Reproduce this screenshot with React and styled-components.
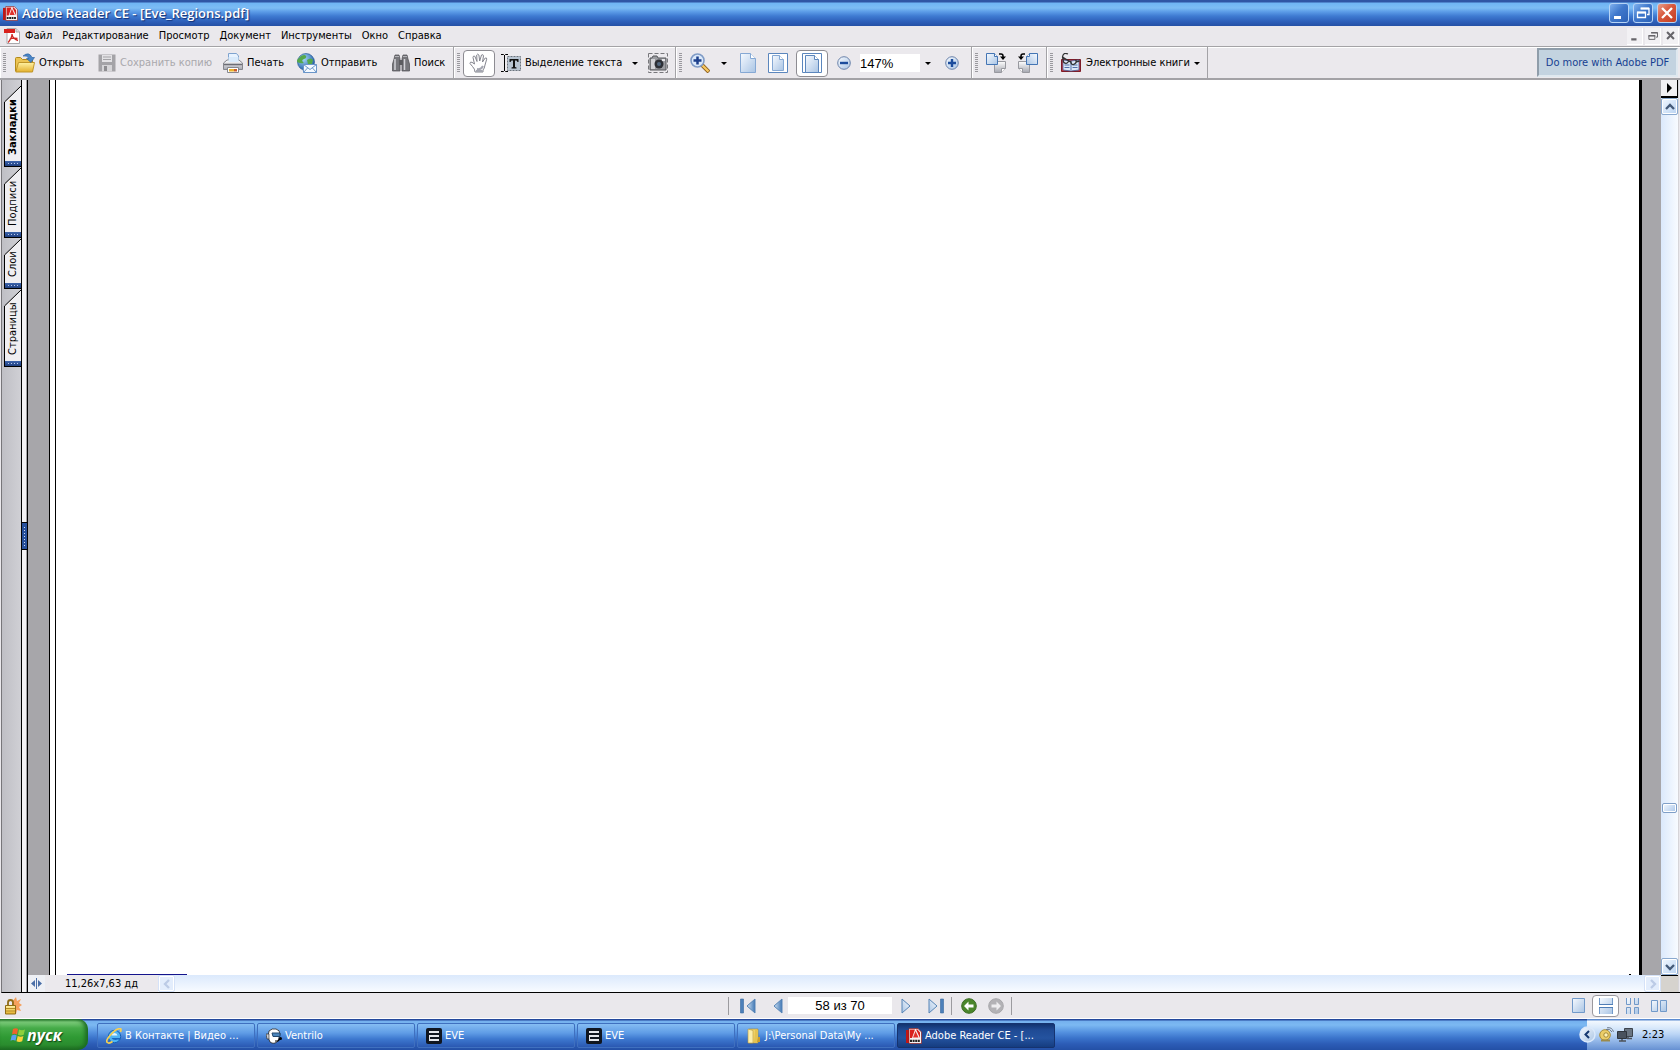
import React, { useState } from "react";
import styled, { createGlobalStyle, css } from "styled-components";

const UI_FONT = '"DejaVu Sans Condensed", "Noto Sans", sans-serif';

const GlobalStyle = createGlobalStyle`
  * {
    box-sizing: border-box;
  }
  body {
    margin: 0;
    overflow: hidden;
  }
  button, input {
    font: inherit;
    color: inherit;
    margin: 0;
    padding: 0;
    border: 0;
    background: none;
  }
`;

const Screen = styled.div`
  display: flex;
  flex-direction: column;
  height: 100vh;
  background: #eae8ec;
  color: #000;
  font-family: ${UI_FONT};
  font-size: 11px;
  line-height: 14px;
`;

const Icon = styled.svg`
  display: block;
  flex: none;
  width: ${(p) => p.$w || 16}px;
  height: ${(p) => p.$h || p.$w || 16}px;
`;

/* ---- title bar ---- */

const TitleBar = styled.header`
  display: flex;
  align-items: center;
  flex: none;
  height: 26px;
  padding: 0 3px;
  gap: 4px;
  background: linear-gradient(#2f55a5 0 2px, #6fb4f4 3px, #7cbcf4 8px, #5a9ae6 12px, #3f7bd2 16px, #2f62bc 21px, #2550a6 26px);
`;

const Title = styled.h1`
  flex: 1;
  margin: 0;
  color: #fff;
  font-family: "Open Sans", "Noto Sans", sans-serif;
  font-size: 13px;
  font-weight: 600;
  line-height: 18px;
  text-shadow: 1px 1px 1px #122e72;
`;

const WindowButton = styled.button`
  display: grid;
  place-items: center;
  width: 20px;
  height: 20px;
  border: 1px solid #b6d4f6;
  border-radius: 3px;
  background: ${(p) =>
    p.$danger
      ? "linear-gradient(135deg, #e8a08c, #d8583c 45%, #c23e22)"
      : "linear-gradient(135deg, #7fb0ee, #3f78cc 45%, #2c62b8)"};
`;

/* ---- menu ---- */

const MenuBar = styled.nav`
  display: flex;
  align-items: center;
  flex: none;
  height: 20px;
  padding: 0 1px 0 4px;
  gap: 2px;
`;

const MenuItems = styled.div`
  display: flex;
  flex: 1;
  gap: 10px;
  padding-left: 3px;
`;

const MenuItem = styled.button`
  white-space: nowrap;
`;

const DocButton = styled.button`
  display: grid;
  place-items: center;
  width: 16px;
  height: 17px;
  background: #f2f1f4;
  border-right: 1px solid #fff;
  border-bottom: 1px solid #fff;
`;

/* ---- toolbar ---- */

const ToolBar = styled.div`
  display: flex;
  flex: none;
  height: 34px;
  padding-right: 2px;
  border-top: 1px solid #a4a3a6;
  border-bottom: 2px solid #a3a2a6;
  background: #ebe9ed;
  box-shadow: inset 0 1px #fff;
`;

const ToolGroup = styled.div`
  display: flex;
  align-items: center;
  flex: none;
  width: ${(p) => p.$w}px;
  padding: 1px 0 0 3px;
  border-right: 1px solid #a3a2a6;
  box-shadow: inset 1px 0 #fff;
`;

const Grip = styled.span`
  width: 3px;
  height: 20px;
  margin-right: ${(p) => p.$gap || 8}px;
  background: repeating-linear-gradient(#9a999e 0 1px, transparent 1px 2px);
`;

const ToolButton = styled.button`
  display: flex;
  align-items: center;
  flex: none;
  gap: ${(p) => p.$gap || 4}px;
  height: 27px;
  width: ${(p) => p.$w}px;
  white-space: nowrap;
  ${(p) =>
    p.$center &&
    css`
      justify-content: center;
    `}
  ${(p) =>
    p.$active &&
    css`
      justify-content: center;
      background: #fff;
      border: 1px solid #8d8c92;
      border-radius: 4px;
    `}
  ${(p) =>
    p.$apart &&
    css`
      margin-right: 6px;
    `}
  &:disabled {
    color: #a9a8ac;
  }
`;

const Caret = styled.span`
  border: 3px solid transparent;
  border-top-color: #000;
  border-bottom: 0;
`;

const ZoomInput = styled.input`
  flex: none;
  width: 60px;
  height: 18px;
  background: #fff;
  font-family: "Liberation Sans", Arial, sans-serif;
  font-size: 13px;
`;

const PromoLink = styled.a`
  display: grid;
  place-items: center;
  width: 141px;
  margin: 1px 0 1px auto;
  border: 2px solid;
  border-color: #8f9daa #dfe8ef #dfe8ef #8f9daa;
  background: #c3d3e0;
  color: #173f91;
  font-family: "DejaVu Sans Condensed", sans-serif;
  font-size: 11px;
  text-decoration: none;
  white-space: nowrap;
`;

/* ---- workspace ---- */

const Workspace = styled.main`
  display: flex;
  flex: 1;
  min-height: 0;
  border-left: 1px solid #77767a;
  margin-left: 1px;
  padding-right: 1px;
  border-bottom: 1px solid #000;
`;

const NavPane = styled.div`
  display: flex;
  flex-direction: column;
  flex: none;
  width: 20px;
  padding: 6px 0 0 2px;
  gap: 1px;
  background: linear-gradient(90deg, #bfbfc5, #d0d0d5);
  border-right: 1px solid #000;
`;

const SideTab = styled.button`
  position: relative;
  display: flex;
  flex-direction: column;
  flex: none;
  width: 17px;
  height: ${(p) => p.$h}px;
`;

const TabShape = styled.svg`
  position: absolute;
  inset: 0;
  width: 100%;
  height: 100%;
`;

const TabText = styled.span`
  position: relative;
  flex: 1;
  writing-mode: vertical-rl;
  transform: rotate(180deg);
  width: 17px;
  line-height: 17px;
  text-align: left;
  padding-top: 6px;
  font-weight: ${(p) => (p.$bold ? 700 : 400)};
`;

const TabFoot = styled.span`
  position: relative;
  height: 6px;
  margin-left: 1px;
  border-bottom: 1px solid #000;
  background: repeating-linear-gradient(90deg, transparent 0 2px, #b8c8ec 2px 3px) 1px 2px / 13px 1px no-repeat, linear-gradient(#3c64ac, #1f3f80);
`;

const Splitter = styled.div`
  display: grid;
  align-items: center;
  flex: none;
  width: 6px;
  background: #f4f3f5;
  border-right: 1px solid #000;
  box-shadow: inset -1px 0 #a5a4a8;
`;

const SplitHandle = styled.button`
  width: 6px;
  height: 28px;
  border: solid #000;
  border-width: 1px 1px 1px 0;
  background: repeating-linear-gradient(transparent 0 2px, #cfdcf5 2px 3px) 2px 2px / 1px 22px no-repeat, #27509b;
`;

const DocPane = styled.section`
  display: flex;
  flex-direction: column;
  flex: 1;
  min-width: 0;
`;

const Canvas = styled.div`
  display: flex;
  flex: 1;
  padding: 0 19px 0 21px;
  min-height: 0;
  background: #a7a6aa;
`;

const PageMargin = styled.div`
  flex: none;
  width: 7px;
  border: solid #000;
  border-width: 0 1px;
  background: #fff;
`;

const Page = styled.article`
  display: flex;
  align-items: flex-end;
  justify-content: space-between;
  flex: 1;
  padding: 0 8px 0 11px;
  background: #fff;
  border-right: 3px solid #000;
`;

const PageRule = styled.span`
  width: ${(p) => p.$w}px;
  height: 1px;
  background: ${(p) => p.$color};
`;

const BottomScroll = styled.div`
  display: flex;
  flex: none;
  height: 17px;
  background: linear-gradient(#dbe9fc, #f8fbff);
`;

const PaneToggle = styled.button`
  display: grid;
  place-items: center;
  width: 17px;
  background: #eef0f5;
`;

const PageSize = styled.span`
  width: 113px;
  padding-left: 20px;
  line-height: 18px;
  background: #ebe9ed;
  white-space: nowrap;
`;

const ScrollButton = styled.button`
  display: grid;
  place-items: center;
  flex: none;
  width: 17px;
  height: 17px;
  border: 1px solid ${(p) => (p.$faint ? "#d5e2f8" : "#8aa9cf")};
  border-radius: 2px;
  background: ${(p) =>
    p.$faint ? "#e3edfc" : "linear-gradient(135deg, #f2f8ff, #b9d3f2)"};
  box-shadow: inset 0 0 0 1px #fff;
  color: ${(p) => (p.$faint ? "#bccbe6" : "#445a78")};
`;

const SideScroll = styled.div`
  display: flex;
  flex-direction: column;
  flex: none;
  width: 18px;
  background: linear-gradient(90deg, #dbe9fc, #f8fbff);
  border-right: 1px solid #d6d5d9;
`;

const Flyout = styled.button`
  display: grid;
  place-items: center;
  height: 18px;
  background: #f1f0f3;
  border: solid #000;
  border-width: 0 1px 2px 0;
`;

const Track = styled.div`
  flex: ${(p) => p.$grow};
`;

const Thumb = styled.div`
  height: 10px;
  margin: 0 1px;
  border: 1px solid #7f9fc8;
  border-radius: 2px;
  background: linear-gradient(135deg, #f4f9ff, #a9c6ea);
  box-shadow: inset 0 0 0 1px #fff;
`;

const Corner = styled.div`
  height: 17px;
  background: #d6d3ce;
  border-top: 1px solid #000;
`;

/* ---- status bar ---- */

const StatusBar = styled.footer`
  display: flex;
  align-items: center;
  flex: none;
  height: 26px;
  padding: 0 7px 0 4px;
  border-bottom: 1px solid #fff;
`;

const StatusLeft = styled.div`
  width: 171px;
`;

const Pager = styled.div`
  display: flex;
  align-items: center;
  margin: 0 auto;
  height: 18px;
  width: 284px;
  border: solid #9c9b9f;
  border-width: 0 1px;
`;

const PagerButton = styled.button`
  display: grid;
  place-items: center;
  flex: none;
  width: ${(p) => p.$w}px;
  height: 18px;
`;

const PageInput = styled.input`
  flex: none;
  width: 104px;
  height: 17px;
  background: #fff;
  text-align: center;
  font-family: "Liberation Sans", Arial, sans-serif;
  font-size: 13px;
`;

const PagerLine = styled.span`
  flex: none;
  width: 1px;
  height: 18px;
  background: #9c9b9f;
`;

const ViewModes = styled.div`
  display: flex;
  align-items: center;
`;

const ViewButton = styled.button`
  display: grid;
  place-items: center;
  width: 27px;
  height: 22px;
  border: 1px solid ${(p) => (p.$active ? "#9a989e" : "transparent")};
  border-radius: 4px;
  background: ${(p) => (p.$active ? "#fff" : "none")};
`;

/* ---- task bar ---- */

const TaskBar = styled.div`
  display: flex;
  flex: none;
  height: 31px;
  background: linear-gradient(#24489c 0 1px, #74b0ee 2px, #7cb9f2 6px, #5592e0 13px, #3b74cb 19px, #2c5cb6 25px, #2350a6 31px);
  color: #fff;
`;

const StartButton = styled.button`
  display: flex;
  align-items: center;
  gap: 1px;
  flex: none;
  width: 88px;
  margin-right: 9px;
  padding-left: 10px;
  border-radius: 0 10px 10px 0;
  background: linear-gradient(#2c7f31 0, #7dcc7b 3px, #46ab49 9px, #2f9a34 18px, #2a8c2e 26px, #1e6d22 31px);
  box-shadow: inset -3px 0 4px #1b6a22;
  color: #fff;
  font-family: "Open Sans", "Noto Sans", sans-serif;
  font-size: 16px;
  font-style: italic;
  font-weight: 700;
  text-shadow: 1px 1px 1px #124516;
`;

const TaskList = styled.div`
  display: flex;
  flex: 1;
  gap: 2px;
  padding: 4px 0 2px;
`;

const TaskButton = styled.button`
  display: flex;
  align-items: center;
  flex: 0 1 158px;
  gap: 3px;
  padding: 0 8px;
  border: 1px solid ${(p) => (p.$active ? "#16336f" : "#3f70bf")};
  border-radius: 2px;
  white-space: nowrap;
  background: ${(p) =>
    p.$active
      ? "linear-gradient(#12336f, #1f4a94 6px, #24539f 14px, #153c80)"
      : "linear-gradient(#85bdf3, #5f9ce6 9px, #3d78cf 15px, #2a58b2)"};
`;

const Tray = styled.div`
  display: flex;
  align-items: center;
  flex: none;
  width: 93px;
  gap: 3px;
  background: linear-gradient(#5c8bd0 0 1px, #f2f8fe 2px, #dcebfb 8px, #bcd6f6 15px, #93b7e8 22px, #6690d2 31px);
  color: #000;
`;

const TrayToggle = styled.button`
  flex: none;
  margin-left: -8px;
`;

const Clock = styled.time`
  margin-left: 6px;
  font-size: 11px;
`;

/* ---- drawings ---- */

const Defs = styled.svg`
  position: absolute;
  width: 0;
  height: 0;
`;

const Gradients = () => (
  <Defs aria-hidden="true">
    <defs>
      <linearGradient id="blue" x1="0" y1="0" x2="1" y2="1">
        <stop offset="0" stopColor="#f2f8ff" />
        <stop offset="1" stopColor="#7ba6d6" />
      </linearGradient>
      <linearGradient id="pane" x1="0" y1="0" x2="1" y2="1">
        <stop offset="0" stopColor="#f6faff" />
        <stop offset="1" stopColor="#a9c4e4" />
      </linearGradient>
      <linearGradient id="steel" x1="0" y1="0" x2="1" y2="0">
        <stop offset="0" stopColor="#d4e5f5" />
        <stop offset="1" stopColor="#3f76b4" />
      </linearGradient>
      <linearGradient id="gold" x1="0" y1="0" x2="0" y2="1">
        <stop offset="0" stopColor="#fff2a4" />
        <stop offset="1" stopColor="#e4b02c" />
      </linearGradient>
      <radialGradient id="globe" cx="0.35" cy="0.3" r="0.8">
        <stop offset="0" stopColor="#a9dcfa" />
        <stop offset="1" stopColor="#12509c" />
      </radialGradient>
      <linearGradient id="silver" x1="0" y1="0" x2="0" y2="1">
        <stop offset="0" stopColor="#fff" />
        <stop offset="1" stopColor="#a5a7b0" />
      </linearGradient>
    </defs>
  </Defs>
);

const ReaderIcon = ({ size = 16 }) => (
  <Icon $w={size} viewBox="0 0 16 16">
    <path d="M0 2h8v13H0z" fill="#c01616" />
    <path d="M3 .5h9l3.500 3.500v11.500H3z" fill="#f8f2f2" stroke="#8e2020" strokeWidth=".7" />
    <path d="M4 1.500h5L6 10H4zM10 1.500h1.500L14 4.500V10z" fill="#d9201d" />
    <path d="M9.500 3 7 9.500h5.500z" fill="#e0302c" />
    <path d="M4 12.800h10" stroke="#222" strokeWidth="2.200" strokeDasharray="2 .6" />
  </Icon>
);

const PdfIcon = () => (
  <Icon $w={16} viewBox="0 0 16 16">
    <path d="M3 .5h9l3.500 3.500v11.500H3z" fill="#fff" stroke="#a9a9ad" />
    <path d="M12 .5V4h3.500" fill="#ddd" stroke="#a9a9ad" />
    <path d="M0 1h11v4H0z" fill="#d8211d" />
    <path d="M8 6q.3 3-3.800 8.500M8 6q.5 5 6 6.500M5.500 11.500q3-2 8-1" fill="none" stroke="#cf2a25" strokeWidth="1.300" />
  </Icon>
);

const OpenIcon = () => (
  <Icon $w={20} viewBox="0 0 20 20">
    <path d="M.5 5.500q0-1 1-1h4l2 2h9q1 0 1 1V18H.5z" fill="#ecc453" stroke="#b28a1c" />
    <path d="M3.500 9.500h16l-2 9.500H.8z" fill="url(#gold)" stroke="#c0962a" />
    <path d="M8 3q6-5 9 1.500h2.500L16 9.500l-4.500-4H14Q12 2 8 3z" fill="#4a86c8" stroke="#245a9c" strokeWidth=".6" />
  </Icon>
);

const SaveIcon = () => (
  <Icon $w={18} viewBox="0 0 18 18">
    <path d="M.5.5h17v17h-17z" fill="#a4a3a7" />
    <path d="M4 1h10v7H4z" fill="#e3e2e5" />
    <path d="M5 3h8M5 5.500h8" stroke="#a4a3a7" />
    <path d="M4 11h10v6.500H4z" fill="#d6d5d8" />
    <path d="M6 12h3v5H6z" fill="#8e8d91" />
  </Icon>
);

const PrintIcon = () => (
  <Icon $w={20} viewBox="0 0 20 20">
    <path d="M5.500.5h8l2 2.500v6h-10z" fill="#e8f3ff" stroke="#7fa3cf" />
    <path d="M.5 10l3.500-3h12l3.500 3v6.500H.5z" fill="url(#silver)" stroke="#85868d" />
    <path d="M5.500 4h10v5h-10z" fill="#d9eafb" />
    <path d="M1 11.500h18" stroke="#6c6d74" strokeWidth="1.500" />
    <path d="M4.500 14.500h11v5h-11z" fill="#fff" stroke="#85868c" />
    <path d="M6 16h5v2.500H6z" fill="#e9b32c" />
    <path d="M11 16h3v2.500h-3z" fill="#cc5b2d" />
  </Icon>
);

const SendIcon = () => (
  <Icon $w={20} viewBox="0 0 20 20">
    <circle cx="9" cy="9" r="8.500" fill="url(#globe)" stroke="#1a4c8e" strokeWidth=".6" />
    <path d="M4 3q4-2 5 0t-2 3-1 3-3 1-2-4zM10 7q4-3 6 0l-1 4h-4z" fill="#55a84a" />
    <path d="M6.500 11.500h13v8h-13z" fill="#f4f9ff" stroke="#6a95c8" />
    <path d="M6.500 11.500 13 16.500l6.500-5M6.500 19.500l4-4.500M19.500 19.500l-4-4.500" fill="none" stroke="#6a95c8" />
  </Icon>
);

const FindIcon = () => (
  <Icon $w={18} viewBox="0 0 18 18">
    <path d="M2 5l1-4h4l1 4v12H.5V10zM16 5l-1-4h-4l-1 4v12h7.500V10z" fill="#77777c" stroke="#4c4c50" strokeWidth=".7" />
    <path d="M7 6h4v5H7z" fill="#5c5c60" />
    <path d="M3 5v11M12.500 5v11" stroke="#d3d3d8" strokeWidth="1.500" />
    <path d="M3 2.500h4M11 2.500h4" stroke="#b3b3b8" />
  </Icon>
);

const HandIcon = () => (
  <Icon $w={20} viewBox="0 0 20 20">
    <path
      d="M6 19q0-3-2.500-5.500L1 10.500q0-2 2-1.200L5.500 11 4 4.500q0-2 1.800-1.300L8 8.500 7.700 2q.8-1.800 2.200 0l.8 6L12.500 2q1.700-1 2 .8L13.500 9l2.700-4q1.800-.5 1.500 1.200L16 12q-.5 3.500-2 5v2z"
      fill="#fff" stroke="#84858e" strokeWidth="1" strokeLinejoin="round"
    />
    <path d="M7 18h6.500M8 16q4 1 6-3" stroke="#a4a6b0" strokeWidth="2" fill="none" />
  </Icon>
);

const SelectTextIcon = () => (
  <Icon $w={20} viewBox="0 0 20 20">
    <path d="M6.500 3.500h13v14h-13z" fill="#b9c5d2" stroke="#6b737c" strokeDasharray="2 1" />
    <path d="M0 1.500h2.500l1 1 1-1H7M0 18.500h2.500l1-1 1 1H7M3.500 2v16" fill="none" stroke="#000" />
    <path d="M8.500 6h9v3h-1l-1-1.500H14V14l1.500.5v1h-5v-1L12 14V7.500h-1.500L9.500 9h-1z" fill="#111" />
  </Icon>
);

const CameraIcon = () => (
  <Icon $w={20} viewBox="0 0 20 20">
    <path d="M.5.5h19v19H.5z" fill="none" stroke="#77777b" strokeDasharray="4 2" />
    <path d="M2 5h2l1-2h4l1 2h8v12H2z" fill="#9b9ca1" stroke="#55565b" />
    <path d="M3 6h4v10H3z" fill="#d2d3d8" />
    <circle cx="11" cy="11" r="4.500" fill="#2c2f36" />
    <circle cx="11" cy="11" r="2" fill="#536880" />
    <path d="M14 6h3v2h-3z" fill="#e6e6ea" />
  </Icon>
);

const LoupeIcon = () => (
  <Icon $w={20} viewBox="0 0 20 20">
    <path d="M11 11l8 8" stroke="#8a5c1c" strokeWidth="4" />
    <path d="M11.500 11.500l7 7" stroke="#f7c861" strokeWidth="2.400" />
    <circle cx="7.500" cy="7.500" r="6.500" fill="#dbe9fa" stroke="#7f9bc6" strokeWidth="1.600" />
    <path d="M7.500 3.500v8M3.500 7.500h8" stroke="#1c3f8c" strokeWidth="2.500" />
  </Icon>
);

const SheetIcon = () => (
  <Icon $w={16} $h={20} viewBox="0 0 16 20">
    <path d="M.5.5h10l5 5v14H.5z" fill="url(#pane)" stroke="#85a8d4" />
    <path d="M10.500.5v5h5" fill="#fff" stroke="#85a8d4" />
  </Icon>
);

const FitPageIcon = () => (
  <Icon $w={20} viewBox="0 0 20 20">
    <path d="M.5.5h19v19H.5z" fill="#fff" stroke="#5b86bd" />
    <path d="M4.500 2.500h7l4 4v11h-11z" fill="url(#pane)" stroke="#85a8d4" />
    <path d="M11.500 2.500v4h4" fill="#fff" stroke="#85a8d4" />
  </Icon>
);

const FitWidthIcon = () => (
  <Icon $w={20} viewBox="0 0 20 20">
    <path d="M.5.5h19v19H.5z" fill="#fff" stroke="#5b86bd" />
    <path d="M3.500 2.500h9l4 4v13h-13z" fill="url(#pane)" stroke="#5b86bd" />
    <path d="M12.500 2.500v4h4" fill="#fff" stroke="#5b86bd" />
  </Icon>
);

const RoundIcon = ({ plus }) => (
  <Icon $w={14} viewBox="0 0 14 14">
    <circle cx="7" cy="7" r="6.300" fill="url(#pane)" stroke="#6c83aa" />
    <path d={plus ? "M7 3v8M3 7h8" : "M3 7h8"} stroke="#1c4c9c" strokeWidth="2.400" />
  </Icon>
);

const RotateIcon = ({ ccw }) => (
  <Icon $w={20} viewBox="0 0 20 20">
    <g transform={ccw ? "translate(20 0) scale(-1 1)" : undefined}>
      <path d="M8.500 8.500h11v7l-4 4h-7z" fill="url(#silver)" stroke="#98999f" />
      <path d="M15.500 19.500v-4h4" fill="#fff" stroke="#98999f" />
      <path d="M.5.5h8l3 3v8H.5z" fill="url(#pane)" stroke="#4475b4" />
      <path d="M8.500.5v3h3" fill="#fff" stroke="#4475b4" />
      <path d="M13 1h2q2 0 2 2v1" fill="none" stroke="#000" strokeWidth="1.500" />
      <path d="M14 3.500h6L17 7z" />
    </g>
  </Icon>
);

const BookIcon = () => (
  <Icon $w={20} viewBox="0 0 20 20">
    <path d="M.5 6.500h19v12H.5z" fill="#c4353a" stroke="#7d1c28" />
    <path d="M2 7l8 1 8-1v10l-8 1-8-1z" fill="#dce8f8" stroke="#44619a" strokeWidth=".8" />
    <path d="M10 8v9M3.500 12h5M3.500 14.500h5M11.500 12h5M11.500 14.500h5" stroke="#5270a8" />
    <path d="M7 1Q2-1 1.500 4l1 5q3 3 5-.5M1.500 4l8 5M9.500 8q1 5 4 3t1-4M14.500 9l4-1" fill="none" stroke="#333" strokeWidth="1.300" />
  </Icon>
);

const WinGlyph = ({ kind, size = 16, color = "#fff" }) => (
  <Icon $w={size} viewBox="0 0 16 16" fill="none" stroke={color}>
    {kind === "min" && <path d="M3 12.500h7" strokeWidth="3" />}
    {kind === "max" && (
      <>
        <path d="M2.500 7.500h8v5h-8zM6 3.500h8v6h-2" strokeWidth="1.300" />
        <path d="M2 7.500h9M5.500 3.500H14" strokeWidth="2" />
      </>
    )}
    {kind === "close" && <path d="M3 3l10 10M13 3 3 13" strokeWidth={size < 14 ? 3 : 2.300} />}
  </Icon>
);

const chevrons = {
  up: "M1 7l4-4 4 4",
  down: "M1 3l4 4 4-4",
  left: "M7 1 3 5l4 4",
  right: "M3 1l4 4-4 4",
};

const Chevron = ({ dir }) => (
  <Icon $w={10} viewBox="0 0 10 10">
    <path d={chevrons[dir]} fill="none" stroke="currentColor" strokeWidth="2.300" />
  </Icon>
);

const StepIcon = ({ next, end }) => (
  <Icon $w={end ? 16 : 10} $h={16} viewBox={end ? "0 0 16 16" : "0 0 10 16"}>
    <g transform={next ? `translate(${end ? 16 : 10} 0) scale(-1 1)` : undefined}>
      {end && <path d="M.5 1h3v14h-3z" fill="#4d80ba" stroke="#38689f" strokeWidth=".6" />}
      <path d={end ? "M15 1v14L7 8z" : "M9 1v14L1 8z"} fill={next ? "url(#pane)" : "url(#steel)"} stroke="#5684b6" />
    </g>
  </Icon>
);

const HistoryIcon = ({ next }) => (
  <Icon $w={16} viewBox="0 0 16 16">
    <circle cx="8" cy="8" r="7.300" fill={next ? "#b3b2b6" : "#4b862b"} stroke={next ? "#a8a7ab" : "#3d6d25"} />
    <path
      d={next ? "M13 8 8.500 3.500v3H3.500v3h5v3z" : "M3 8l4.500-4.500v3h5v3h-5v3z"}
      fill={next ? "#eeedf0" : "#fff"}
    />
  </Icon>
);

const LockIcon = () => (
  <Icon $w={18} viewBox="0 0 18 18">
    <path d="M12 0l1 4 4-2-2 4 3 2-3 2 2 4-4-1-1 4-4-5V5z" fill="#f5a05c" />
    <path d="M4 9V5.500Q4 3 6.500 3T9 5.500V9" fill="none" stroke="#8f6c17" strokeWidth="1.800" />
    <path d="M1.500 8.500h10v8.500h-10z" fill="url(#gold)" stroke="#8f6c17" />
    <path d="M2 11.500h9M2 14h9" stroke="#b58a22" />
  </Icon>
);

const ViewIcon = ({ kind }) => (
  <Icon $w={kind === "dual" ? 17 : 14} $h={16} viewBox={kind === "dual" ? "0 0 17 16" : "0 0 14 16"}>
    {kind === "single" && <path d="M.5.500h12v14H.5z" fill="url(#pane)" stroke="#7199c9" />}
    {kind === "scroll" && (
      <>
        <path d="M.5 0v6.500h13V0M.5 16V9.500h13V16" fill="url(#pane)" stroke="#7199c9" />
        <path d="M0 6.500h14M0 9.500h14" stroke="#4f7db6" />
      </>
    )}
    {kind === "facing" && (
      <path d="M.5 0v6.500h4V0M8.500 0v6.500h4V0M.5 16V9.500h4V16M8.500 16V9.500h4V16" fill="url(#pane)" stroke="#7199c9" />
    )}
    {kind === "dual" && <path d="M.5 2.500h6v11h-6zM9.500 2.500h6v11h-6z" fill="url(#pane)" stroke="#7199c9" />}
  </Icon>
);

const WindowsLogo = () => (
  <Icon $w={16} viewBox="0 0 16 16">
    <path d="M3 2q3-1.500 5 0L7 7.500q-3-1.500-5 0z" fill="#f0622b" />
    <path d="M9 2.500q3 1.500 6 0l-1.300 5.300q-3 1.500-5.700 0z" fill="#8dd03c" />
    <path d="M1.700 8.500q3-1.500 5 0l-1.200 5.300q-2.500-1.500-5 0z" fill="#5aa0f0" />
    <path d="M7.700 9q3 1.500 5.700 0l-1.200 5.300q-3 1.500-5.700 0z" fill="#fbd23a" />
  </Icon>
);

const IeIcon = () => (
  <Icon $w={16} viewBox="0 0 16 16">
    <circle cx="8.500" cy="8.500" r="6.200" fill="#4fb4f4" stroke="#1560b8" />
    <path d="M5.500 7.500q.5-2.500 3-2.500t3 2.500z" fill="#e8f5ff" />
    <path d="M5.500 10h9.500l-1 2q-2-1-4.500 0-3 0-4-2z" fill="#1a67c0" />
    <path d="M14.500 4q1.500-4-1.500-3.300Q9 1.500 4 7.500t-2.500 7q1.500 1.500 5-1" fill="none" stroke="#f7d050" strokeWidth="1.700" />
  </Icon>
);

const VentriloIcon = () => (
  <Icon $w={16} viewBox="0 0 16 16">
    <path d="M3 3q3-3 7-2t4 5l-2 7q-4 4-8 1L2 9z" fill="#fff" stroke="#222" strokeWidth=".8" />
    <path d="M6 5h8v3.500H7z" fill="#4c86bc" stroke="#24486e" />
    <path d="M0 6h3v5H1z" fill="#c9ccd2" stroke="#222" strokeWidth=".6" />
    <path d="M9 13h3l2-2" fill="none" stroke="#000" strokeWidth="1.200" />
    <circle cx="14.500" cy="10.500" r="1.500" />
  </Icon>
);

const EveIcon = () => (
  <Icon $w={16} viewBox="0 0 16 16">
    <rect width="16" height="16" rx="2" fill="#101620" />
    <path d="M3 4h10M3 8h10M3 12h10" stroke="#e6e8ee" strokeWidth="2" />
    <path d="M3.500 7v5" stroke="#e6e8ee" />
  </Icon>
);

const FolderIcon = () => (
  <Icon $w={16} viewBox="0 0 16 16">
    <path d="M3 1h9v14H3z" fill="#f2d46a" stroke="#a98a2e" strokeWidth=".6" />
    <path d="M2 1l5 1.500V15H2z" fill="#fbeeab" stroke="#b9983a" strokeWidth=".6" />
    <path d="M9 2h3v12H8z" fill="#e3c251" />
    <path d="M12 9h2v5h-3z" fill="#c99e2e" />
  </Icon>
);

const SpeakerIcon = () => (
  <Icon $w={15} viewBox="0 0 15 15">
    <circle cx="6" cy="8" r="5.300" fill="#ebcd68" stroke="#a98d35" />
    <circle cx="7" cy="8" r="2.200" fill="#fff3b8" stroke="#8f7422" strokeWidth=".8" />
    <path d="M2 13.500h9" stroke="#9b8a4a" strokeWidth="2" />
    <path d="M7 2.500q4-1.500 6 2.500M8 .8q5-1 6.500 4" fill="none" stroke="#6e7b8c" />
  </Icon>
);

const NetworkIcon = () => (
  <Icon $w={16} viewBox="0 0 16 16">
    <path d="M7.500 1.500h8v8h-8z" fill="#6a7582" stroke="#3d444d" />
    <path d="M.5 4.500h9v7h-9z" fill="#49525e" stroke="#2f353d" />
    <path d="M2 14h7M5 12v2M11 9.500v2M10 11.500h5" stroke="#4c525a" strokeWidth="1.500" />
  </Icon>
);

/* ---- app ---- */

const menus = ["Файл", "Редактирование", "Просмотр", "Документ", "Инструменты", "Окно", "Справка"];

const fileTools = [
  { label: "Открыть", w: 83, icon: <OpenIcon /> },
  { label: "Сохранить копию", w: 125, icon: <SaveIcon />, disabled: true },
  { label: "Печать", w: 74, icon: <PrintIcon /> },
  { label: "Отправить", w: 95, icon: <SendIcon /> },
  { label: "Поиск", w: 60, icon: <FindIcon /> },
];

const sideTabs = [
  { label: "Закладки", h: 81 },
  { label: "Подписи", h: 70 },
  { label: "Слои", h: 50 },
  { label: "Страницы", h: 77 },
];

const views = ["single", "scroll", "facing", "dual"];

const tasks = [
  { label: "В Контакте | Видео ...", icon: <IeIcon /> },
  { label: "Ventrilo", icon: <VentriloIcon /> },
  { label: "EVE", icon: <EveIcon /> },
  { label: "EVE", icon: <EveIcon /> },
  { label: "J:\\Personal Data\\My ...", icon: <FolderIcon /> },
  { label: "Adobe Reader CE - [...", icon: <ReaderIcon />, active: true },
];

const Tab = ({ label, h, bold }) => (
  <SideTab $h={h}>
    <TabShape viewBox={`0 0 17 ${h}`} aria-hidden="true">
      <path d={`M17 0 .5 16V${h}H17z`} fill="#f0eff2" />
      <path d={`M17 0 .5 16V${h}`} fill="none" stroke="#000" />
    </TabShape>
    <TabText $bold={bold}>{label}</TabText>
    <TabFoot />
  </SideTab>
);

const App = () => {
  const [zoom, setZoom] = useState("147%");
  const [page, setPage] = useState("58 из 70");
  const [view, setView] = useState("scroll");

  return (
    <Screen>
      <GlobalStyle />
      <Gradients />

      <TitleBar>
        <ReaderIcon size={15} />
        <Title>Adobe Reader CE - [Eve_Regions.pdf]</Title>
        <WindowButton aria-label="Свернуть"><WinGlyph kind="min" /></WindowButton>
        <WindowButton aria-label="Восстановить"><WinGlyph kind="max" /></WindowButton>
        <WindowButton aria-label="Закрыть" $danger><WinGlyph kind="close" /></WindowButton>
      </TitleBar>

      <MenuBar>
        <PdfIcon />
        <MenuItems>
          {menus.map((name) => (
            <MenuItem key={name}>{name}</MenuItem>
          ))}
        </MenuItems>
        <DocButton aria-label="Свернуть документ"><WinGlyph kind="min" size={12} color="#66656a" /></DocButton>
        <DocButton aria-label="Восстановить документ"><WinGlyph kind="max" size={12} color="#66656a" /></DocButton>
        <DocButton aria-label="Закрыть документ"><WinGlyph kind="close" size={11} color="#66656a" /></DocButton>
      </MenuBar>

      <ToolBar>
        <ToolGroup $w={454}>
          <Grip $gap={9} />
          {fileTools.map((t) => (
            <ToolButton key={t.label} $w={t.w} disabled={t.disabled}>
              {t.icon}
              {t.label}
            </ToolButton>
          ))}
        </ToolGroup>
        <ToolGroup $w={222}>
          <Grip $gap={3} />
          <ToolButton $w={32} $active $apart aria-label="Рука"><HandIcon /></ToolButton>
          <ToolButton $w={124}>
            <SelectTextIcon />
            Выделение текста
          </ToolButton>
          <ToolButton $w={20} $center aria-label="Режим выделения"><Caret /></ToolButton>
          <ToolButton $w={26} $center aria-label="Снимок"><CameraIcon /></ToolButton>
        </ToolGroup>
        <ToolGroup $w={296}>
          <Grip />
          <ToolButton $w={22} aria-label="Масштаб"><LoupeIcon /></ToolButton>
          <ToolButton $w={24} $center aria-label="Вид масштаба"><Caret /></ToolButton>
          <ToolButton $w={24} $center aria-label="Реальный размер"><SheetIcon /></ToolButton>
          <ToolButton $w={36} $center aria-label="Страница целиком"><FitPageIcon /></ToolButton>
          <ToolButton $w={32} $active aria-label="По ширине"><FitWidthIcon /></ToolButton>
          <ToolButton $w={32} $center aria-label="Уменьшить"><RoundIcon /></ToolButton>
          <ZoomInput aria-label="Масштаб" value={zoom} onChange={(e) => setZoom(e.target.value)} />
          <ToolButton $w={16} $center aria-label="Список масштабов"><Caret /></ToolButton>
          <ToolButton $w={32} $center aria-label="Увеличить"><RoundIcon plus /></ToolButton>
        </ToolGroup>
        <ToolGroup $w={75}>
          <Grip />
          <ToolButton $w={32} aria-label="Повернуть по часовой"><RotateIcon /></ToolButton>
          <ToolButton $w={22} aria-label="Повернуть против часовой"><RotateIcon ccw /></ToolButton>
        </ToolGroup>
        <ToolGroup $w={161}>
          <Grip />
          <ToolButton $w={126} $gap={5}>
            <BookIcon />
            Электронные книги
          </ToolButton>
          <ToolButton $w={20} $center aria-label="Меню книг"><Caret /></ToolButton>
        </ToolGroup>
        <PromoLink href="#adobe-pdf">Do more with Adobe PDF</PromoLink>
      </ToolBar>

      <Workspace>
        <NavPane>
          {sideTabs.map((t, i) => (
            <Tab key={t.label} {...t} bold={i === 0} />
          ))}
        </NavPane>
        <Splitter>
          <SplitHandle aria-label="Панель навигации" />
        </Splitter>
        <DocPane>
          <Canvas>
            <PageMargin />
            <Page>
              <PageRule $w={120} $color="#14148c" />
              <PageRule $w={2} $color="#000" />
            </Page>
          </Canvas>
          <BottomScroll>
            <PaneToggle aria-label="Ширина панели">
              <Icon $w={11} viewBox="0 0 11 11">
                <path d="M4 2v7L0 5.500zM7 2v7l4-3.500z" fill="#4b6fa8" />
                <path d="M5.500 0v11" stroke="#4b6fa8" />
              </Icon>
            </PaneToggle>
            <PageSize>11,26x7,63 дд</PageSize>
            <ScrollButton $faint aria-label="Влево"><Chevron dir="left" /></ScrollButton>
            <Track $grow={1} />
            <ScrollButton $faint aria-label="Вправо"><Chevron dir="right" /></ScrollButton>
          </BottomScroll>
        </DocPane>
        <SideScroll>
          <Flyout aria-label="Меню панели">
            <Icon $w={10} viewBox="0 0 10 10"><path d="M3 0l5 5-5 5z" /></Icon>
          </Flyout>
          <ScrollButton aria-label="Вверх"><Chevron dir="up" /></ScrollButton>
          <Track $grow={688} />
          <Thumb />
          <Track $grow={145} />
          <ScrollButton aria-label="Вниз"><Chevron dir="down" /></ScrollButton>
          <Corner />
        </SideScroll>
      </Workspace>

      <StatusBar>
        <StatusLeft><LockIcon /></StatusLeft>
        <Pager>
          <PagerButton $w={38} aria-label="Первая страница"><StepIcon end /></PagerButton>
          <PagerButton $w={21} aria-label="Предыдущая страница"><StepIcon /></PagerButton>
          <PageInput aria-label="Страница" value={page} onChange={(e) => setPage(e.target.value)} />
          <PagerButton $w={28} aria-label="Следующая страница"><StepIcon next /></PagerButton>
          <PagerButton $w={31} aria-label="Последняя страница"><StepIcon next end /></PagerButton>
          <PagerLine />
          <PagerButton $w={34} aria-label="Назад"><HistoryIcon /></PagerButton>
          <PagerButton $w={20} aria-label="Вперёд"><HistoryIcon next /></PagerButton>
        </Pager>
        <ViewModes>
          {views.map((kind) => (
            <ViewButton key={kind} aria-label={kind} $active={view === kind} onClick={() => setView(kind)}>
              <ViewIcon kind={kind} />
            </ViewButton>
          ))}
        </ViewModes>
      </StatusBar>

      <TaskBar>
        <StartButton>
          <WindowsLogo />
          пуск
        </StartButton>
        <TaskList>
          {tasks.map((t, i) => (
            <TaskButton key={i} $active={t.active}>
              {t.icon}
              {t.label}
            </TaskButton>
          ))}
        </TaskList>
        <Tray>
          <TrayToggle aria-label="Показать значки">
            <Icon $w={17} viewBox="0 0 17 17">
              <circle cx="8.500" cy="8.500" r="7.500" fill="url(#pane)" stroke="#dbe9fb" strokeWidth="1.500" />
              <path d="M10 5 6.500 8.500 10 12" fill="none" stroke="#16386f" strokeWidth="2" />
            </Icon>
          </TrayToggle>
          <SpeakerIcon />
          <NetworkIcon />
          <Clock>2:23</Clock>
        </Tray>
      </TaskBar>
    </Screen>
  );
};

export default App;
